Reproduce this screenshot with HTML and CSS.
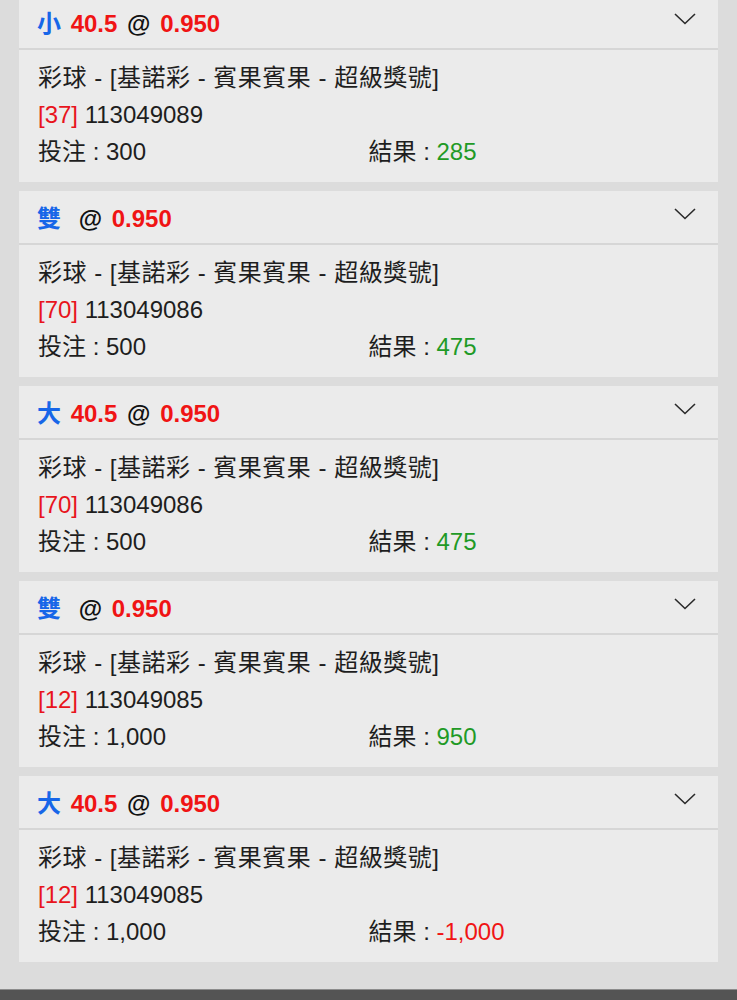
FILE: index.html
```html
<!DOCTYPE html>
<html lang="zh-Hant">
<head>
  <meta charset="UTF-8" />
  <meta name="viewport" content="width=device-width, initial-scale=1" />
  <title>投注記錄</title>
  <link rel="stylesheet" href="styles.css">
</head>
<body>

  <div class="betList">

    <div class="betCard">
      <div class="betHead">
        <div class="betTitle"><span class="side">小</span> <span class="odds">40.5</span> @ <span class="odds">0.950</span></div>
        <svg class="chevron" width="22" height="12" viewBox="0 0 22 12"><path d="M1 1 L11 10.5 L21 1" fill="none" stroke="#2a2a2a" stroke-width="1.6"/></svg>
      </div>
      <div class="betBody">
        <div class="row route">彩球 - [基諾彩 - 賓果賓果 - 超級獎號]</div>
        <div class="row"><span class="ball">[37]</span> 113049089</div>
        <div class="row cols">
          <div>投注 : 300</div>
          <div>結果 : <span class="win">285</span></div>
        </div>
      </div>
    </div>

    <div class="betCard">
      <div class="betHead">
        <div class="betTitle"><span class="side gap">雙</span> @ <span class="odds">0.950</span></div>
        <svg class="chevron" width="22" height="12" viewBox="0 0 22 12"><path d="M1 1 L11 10.5 L21 1" fill="none" stroke="#2a2a2a" stroke-width="1.6"/></svg>
      </div>
      <div class="betBody">
        <div class="row route">彩球 - [基諾彩 - 賓果賓果 - 超級獎號]</div>
        <div class="row"><span class="ball">[70]</span> 113049086</div>
        <div class="row cols">
          <div>投注 : 500</div>
          <div>結果 : <span class="win">475</span></div>
        </div>
      </div>
    </div>

    <div class="betCard">
      <div class="betHead">
        <div class="betTitle"><span class="side">大</span> <span class="odds">40.5</span> @ <span class="odds">0.950</span></div>
        <svg class="chevron" width="22" height="12" viewBox="0 0 22 12"><path d="M1 1 L11 10.5 L21 1" fill="none" stroke="#2a2a2a" stroke-width="1.6"/></svg>
      </div>
      <div class="betBody">
        <div class="row route">彩球 - [基諾彩 - 賓果賓果 - 超級獎號]</div>
        <div class="row"><span class="ball">[70]</span> 113049086</div>
        <div class="row cols">
          <div>投注 : 500</div>
          <div>結果 : <span class="win">475</span></div>
        </div>
      </div>
    </div>

    <div class="betCard">
      <div class="betHead">
        <div class="betTitle"><span class="side gap">雙</span> @ <span class="odds">0.950</span></div>
        <svg class="chevron" width="22" height="12" viewBox="0 0 22 12"><path d="M1 1 L11 10.5 L21 1" fill="none" stroke="#2a2a2a" stroke-width="1.6"/></svg>
      </div>
      <div class="betBody">
        <div class="row route">彩球 - [基諾彩 - 賓果賓果 - 超級獎號]</div>
        <div class="row"><span class="ball">[12]</span> 113049085</div>
        <div class="row cols">
          <div>投注 : 1,000</div>
          <div>結果 : <span class="win">950</span></div>
        </div>
      </div>
    </div>

    <div class="betCard">
      <div class="betHead">
        <div class="betTitle"><span class="side">大</span> <span class="odds">40.5</span> @ <span class="odds">0.950</span></div>
        <svg class="chevron" width="22" height="12" viewBox="0 0 22 12"><path d="M1 1 L11 10.5 L21 1" fill="none" stroke="#2a2a2a" stroke-width="1.6"/></svg>
      </div>
      <div class="betBody">
        <div class="row route">彩球 - [基諾彩 - 賓果賓果 - 超級獎號]</div>
        <div class="row"><span class="ball">[12]</span> 113049085</div>
        <div class="row cols">
          <div>投注 : 1,000</div>
          <div>結果 : <span class="lose">-1,000</span></div>
        </div>
      </div>
    </div>

  </div>

  <div class="bottomBar"></div>

</body>
</html>
```

FILE: styles.css
```css
body {
  margin: 0;
  background: #dcdcdc;
  color: #1e1e1e;
  font-family: "Liberation Sans", Arial, "Noto Sans CJK TC", sans-serif;
  overflow: hidden;
}
.betList {
  display: flex;
  flex-direction: column;
  gap: 9px;
  padding: 0 19px 27px 19px;
  margin-top: -4px;
}
.betCard {
  background: #ebebeb;
}
.betHead {
  display: flex;
  align-items: center;
  justify-content: space-between;
  height: 52px;
  padding: 0 22px 0 18px;
  border-bottom: 2px solid #d6d6d6;
}
.betTitle {
  font-size: 24px;
  font-weight: bold;
  color: #111;
  word-spacing: 3px;
  margin-top: -2px;
}
.side {
  color: #1766e8;
}
.side.gap {
  margin-right: 8px;
}
.odds {
  color: #f01414;
}
.chevron {
  display: block;
  margin-top: -6px;
}
.betBody {
  padding: 9px 19px 12px 19px;
  font-size: 24px;
}
.row {
  line-height: 37px;
  height: 37px;
  white-space: nowrap;
}
.route {
  letter-spacing: 0.5px;
}
.cols {
  display: grid;
  grid-template-columns: 1fr 1fr;
}
.ball {
  color: #e8141c;
}
.win {
  color: #1f9a26;
}
.lose {
  color: #f01414;
}
.bottomBar {
  height: 60px;
  background: #545454;
  border-top: 1px solid #8c8c8c;
}
```
